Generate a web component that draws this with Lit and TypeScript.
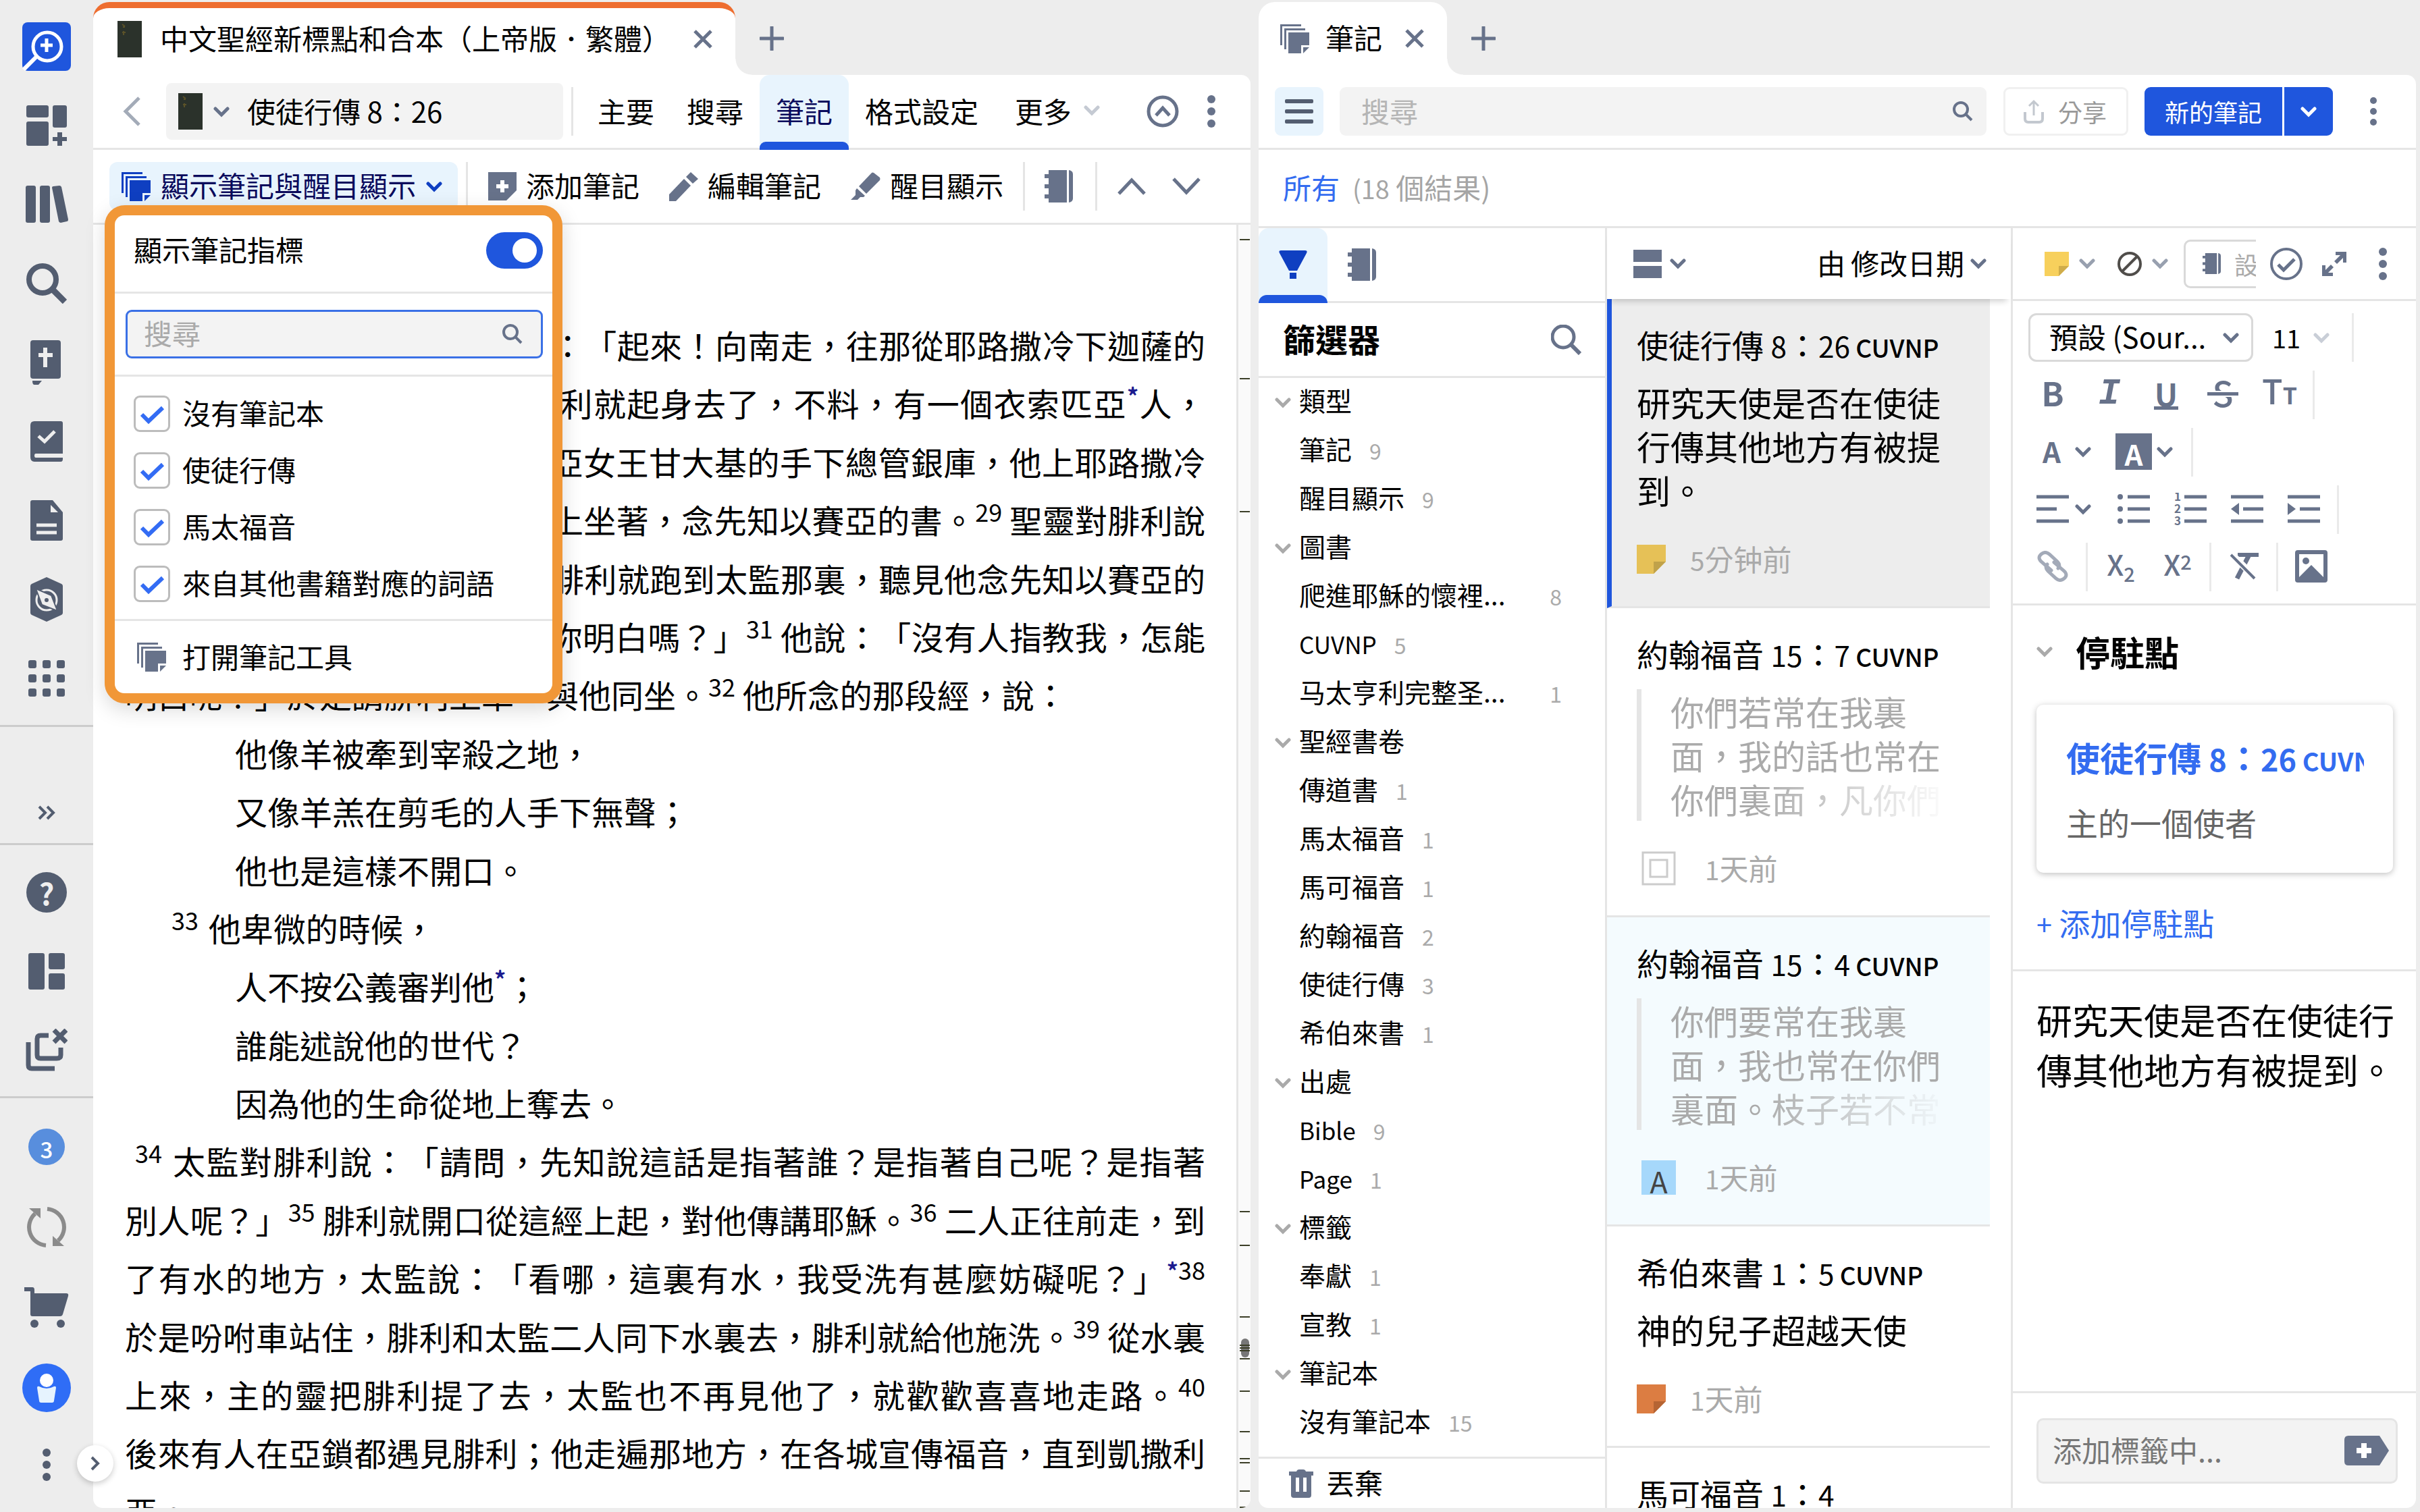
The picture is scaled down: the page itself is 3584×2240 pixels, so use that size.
import { LitElement, html, css, svg, nothing, type TemplateResult } from "lit";
import { customElement } from "lit/decorators.js";
import { classMap } from "lit/directives/class-map.js";

/* ---------- icons ---------- */

const chevronDown = svg`<path d="M3 4 L12 13 L21 4" fill="none" stroke="currentColor" stroke-width="5" stroke-linecap="round" stroke-linejoin="miter"/>`;

const shapes: Record<string, [number, number, TemplateResult]> = {
  logo: [72, 72, svg`
    <rect width="72" height="72" rx="8" fill="#1f56dd"/>
    <circle cx="37" cy="36" r="21" fill="none" stroke="#fff" stroke-width="5"/>
    <path d="M22 50 L2 70" stroke="#fff" stroke-width="6"/>
    <path d="M36 24 V44 M27 34 H45" stroke="#fff" stroke-width="5"/>`],
  addLayout: [60, 60, svg`<g fill="currentColor">
    <rect width="33" height="18" rx="3"/><rect y="24" width="33" height="36" rx="3"/>
    <rect x="39" width="21" height="33" rx="3"/>
    <path d="M46 40 h7 v7 h7 v6 h-7 v7 h-7 v-7 h-7 v-6 h7z"/></g>`],
  library: [63, 56, svg`<g fill="currentColor">
    <rect width="15" height="55" rx="3"/><rect x="21" width="15" height="55" rx="3"/>
    <path d="M39 3 q0-2 2-2 l9-1 q2 0 3 2 l10 48 q0 3-2 3 l-9 2 q-2 0-3-2z"/></g>`],
  search: [60, 60, svg`<circle cx="24" cy="24" r="20" fill="none" stroke="currentColor" stroke-width="8"/><path d="M38 38 L57 57" stroke="currentColor" stroke-width="9"/>`],
  bookCross: [48, 66, svg`
    <path d="M4 0 H41 q4 0 4 4 V53 q0 4-4 4 H4 q-4 0-4-4 V4 q0-4 4-4z" fill="currentColor"/>
    <path d="M3 60 H17 L12 66 H6 q-3 0-3-6z" fill="currentColor"/>
    <path d="M22 11 V40 M12 22 H33" stroke="#eee" stroke-width="6"/>`],
  bookCheck: [48, 60, svg`
    <path d="M6 0 H45 q3 0 3 3 V48 H8 q-2 0-2 3 t2 3 H48 V56 q0 4-3 4 H6 q-6 0-6-7 V6 q0-6 6-6z" fill="currentColor"/>
    <path d="M12 22 L21 30 L36 15" fill="none" stroke="#eee" stroke-width="5"/>`],
  page: [48, 60, svg`
    <path d="M3 0 H33 L48 18 V57 q0 3-3 3 H3 q-3 0-3-3 V3 q0-3 3-3z" fill="currentColor"/>
    <path d="M30 7 V18 H41z" fill="#eee"/>
    <path d="M9 37 H39 M9 48 H39" stroke="#eee" stroke-width="5"/>`],
  hex: [48, 66, svg`
    <path d="M24 0 L46 10 q2 1 2 3 V53 q0 2-2 3 L24 66 L2 56 q-2-1-2-3 V13 q0-2 2-3z" fill="currentColor"/>
    <circle cx="24" cy="34" r="15" fill="none" stroke="#eee" stroke-width="3"/>
    <path d="M8 17 L31 27 L40 50 L17 41z" fill="#eee" stroke="currentColor" stroke-width="2"/>
    <circle cx="24" cy="34" r="3" fill="currentColor"/>`],
  grid: [54, 54, svg`${[0, 21, 42].map((y) => [0, 21, 42].map((x) => svg`<rect x=${x} y=${y} width="12" height="12" rx="3" fill="currentColor"/>`))}`],
  double: [27, 22, svg`<path d="M2 2 L11 11 L2 20 M14 2 L23 11 L14 20" fill="none" stroke="currentColor" stroke-width="4"/>`],
  panes: [54, 54, svg`<g fill="currentColor"><rect width="24" height="54" rx="3"/><rect x="30" width="24" height="24" rx="3"/><rect x="30" y="30" width="24" height="24" rx="3"/></g>`],
  closeAll: [62, 63, svg`
    <path d="M4 20 V54 q0 5 5 5 H43" fill="none" stroke="currentColor" stroke-width="7"/>
    <path d="M34 10 H22 q-5 0-5 5 V39 q0 5 5 5 H46 q6 0 6-5 V28" fill="none" stroke="currentColor" stroke-width="7"/>
    <path d="M42 2 L60 20 M60 2 L42 20" stroke="currentColor" stroke-width="7"/>`],
  sync: [60, 62, svg`
    <path d="M29 58 A27 27 0 0 1 13 11" fill="none" stroke="currentColor" stroke-width="6"/>
    <path d="M4 3 H21 V18z" fill="currentColor"/>
    <path d="M31 4 A27 27 0 0 1 47 51" fill="none" stroke="currentColor" stroke-width="6"/>
    <path d="M56 59 H39 V44z" fill="currentColor"/>`],
  cart: [66, 60, svg`<path d="M0 0 H12 q3 0 3 4 V9 H62 q4 0 3 4 L57 40 q-1 3-4 3 H12 q-3 0-3-3 V6 H0z" fill="currentColor"/><circle cx="15" cy="54" r="6" fill="currentColor"/><circle cx="54" cy="54" r="6" fill="currentColor"/>`],
  avatar: [72, 72, svg`<circle cx="36" cy="36" r="36" fill="#2f6df6"/><path d="M22 36 q0-3 3-2 q11 6 22 0 q3-1 3 2 L47 55 q0 3-3 3 H28 q-3 0-3-3z" fill="#e6f3fe"/><circle cx="36" cy="25" r="10" fill="#fff"/>`],
  dots: [12, 48, svg`<g fill="currentColor"><circle cx="6" cy="6" r="6"/><circle cx="6" cy="24" r="6"/><circle cx="6" cy="42" r="6"/></g>`],
  dotsSmall: [12, 44, svg`<g fill="currentColor"><circle cx="6" cy="6" r="5"/><circle cx="6" cy="22" r="5"/><circle cx="6" cy="38" r="5"/></g>`],
  chevron: [24, 17, chevronDown],
  up: [42, 26, svg`<path d="M2 24 L21 4 L40 24" fill="none" stroke="currentColor" stroke-width="5"/>`],
  down: [42, 26, svg`<path d="M2 2 L21 22 L40 2" fill="none" stroke="currentColor" stroke-width="5"/>`],
  back: [26, 44, svg`<path d="M24 2 L4 22 L24 42" fill="none" stroke="currentColor" stroke-width="5"/>`],
  next: [16, 24, svg`<path d="M3 3 L12 12 L3 21" fill="none" stroke="currentColor" stroke-width="4"/>`],
  close: [28, 28, svg`<path d="M2 2 L26 26 M26 2 L2 26" stroke="currentColor" stroke-width="5"/>`],
  plus: [36, 36, svg`<path d="M18 1 V35 M1 18 H35" stroke="currentColor" stroke-width="5" stroke-linecap="round"/>`],
  book: [36, 54, svg`<rect width="36" height="54" fill="#2b322b"/><path d="M7 5 l4 3 M8 9 h3 M7 17 h5 M9 15 v6" stroke="#5b5228" stroke-width="2"/>`],
  notes: [43, 43, svg`<g fill="currentColor"><path d="M0 0 H31 V3 H3 V31 H0z"/><path d="M6 6 H37 V9 H9 V37 H6z"/><path d="M12 12 H43 V31 H31 V43 H12z"/><path d="M34 34 H43 L34 43z"/></g>`],
  addNote: [42, 42, svg`<path d="M0 0 H42 V27 L27 42 H0z" fill="currentColor"/><path d="M21 12 V30 M12 21 H30" stroke="#fff" stroke-width="6"/>`],
  pencil: [43, 43, svg`<g fill="currentColor"><path d="M0 43 V33 L22 10 L32 20 L10 43z"/><path d="M25 7 L32 0 L43 10 L35 17z"/></g>`],
  marker: [44, 42, svg`<g fill="currentColor"><path d="M12 21 L31 1 q1-1 3 0 L43 8 q1 2 0 4 L23 32z"/><path d="M9 24 L21 35 L19 37 H14 L10 41 H0 L7 34 V27z"/></g>`],
  notebook: [42, 48, svg`<g fill="currentColor"><path d="M6 0 H33 V48 H6 V42 H0 V36 H6 V27 H0 V21 H6 V12 H0 V6 H6z"/><path d="M36 0 q6 1 6 6 V42 q0 5-6 6z"/></g>`],
  circleUp: [48, 48, svg`<circle cx="24" cy="24" r="21" fill="none" stroke="currentColor" stroke-width="5"/><path d="M14 30 L24 19 L34 30" fill="none" stroke="currentColor" stroke-width="5"/>`],
  find: [30, 30, svg`<circle cx="12" cy="12" r="10" fill="none" stroke="currentColor" stroke-width="4"/><path d="M19 19 L28 28" stroke="currentColor" stroke-width="4"/>`],
  findBig: [45, 45, svg`<circle cx="18" cy="18" r="16" fill="none" stroke="currentColor" stroke-width="5"/><path d="M29 29 L43 43" stroke="currentColor" stroke-width="6"/>`],
  menu: [42, 36, svg`<g fill="currentColor"><rect width="42" height="6" rx="2"/><rect y="15" width="42" height="6" rx="2"/><rect y="30" width="42" height="6" rx="2"/></g>`],
  share: [30, 36, svg`<path d="M15 24 V4 M8 10 L15 3 L22 10" fill="none" stroke="currentColor" stroke-width="3"/><path d="M2 19 V29 q0 5 5 5 H23 q5 0 5-5 V19" fill="none" stroke="currentColor" stroke-width="4"/>`],
  funnel: [42, 42, svg`<path d="M3 0 H39 q4 0 2 4 L27 30 H15 L1 4 q-2-4 2-4z M16 33 H26 V42 H16z" fill="currentColor"/>`],
  cards: [42, 42, svg`<path d="M0 0 H42 V18 H0z M0 24 H42 V42 H0z" fill="currentColor"/>`],
  noStyle: [36, 36, svg`<circle cx="18" cy="18" r="16" fill="none" stroke="currentColor" stroke-width="4"/><path d="M7 29 L29 7" stroke="currentColor" stroke-width="4"/>`],
  circleCheck: [48, 48, svg`<circle cx="24" cy="24" r="22" fill="none" stroke="currentColor" stroke-width="4"/><path d="M12 25 L20 33 L36 17" fill="none" stroke="currentColor" stroke-width="5"/>`],
  expand: [36, 36, svg`<g fill="currentColor"><path d="M20 0 H36 V16 H31 V9 L22 18 L18 14 L27 5 H20z"/><path d="M16 36 H0 V20 H5 V27 L13 19 L17 23 L9 31 H16z"/></g>`],
  alignLeft: [48, 42, svg`<path d="M0 3 H48 M0 21 H30 M0 39 H48" stroke="currentColor" stroke-width="5"/>`],
  bullets: [48, 44, svg`<path d="M15 4 H48 M15 22 H48 M15 40 H48" stroke="currentColor" stroke-width="5"/><g fill="currentColor"><circle cx="4" cy="4" r="4"/><circle cx="4" cy="22" r="4"/><circle cx="4" cy="40" r="4"/></g>`],
  numbers: [48, 48, svg`<path d="M15 6 H48 M15 24 H48 M15 42 H48" stroke="currentColor" stroke-width="5"/><g fill="currentColor" font-size="17" font-weight="700"><text x="0" y="12">1</text><text x="0" y="30">2</text><text x="0" y="48">3</text></g>`],
  outdent: [48, 44, svg`<path d="M0 4 H48 M18 22 H48 M0 40 H48" stroke="currentColor" stroke-width="5"/><path d="M0 22 L12 13 V31z" fill="currentColor"/>`],
  indent: [48, 44, svg`<path d="M0 4 H48 M18 22 H48 M0 40 H48" stroke="currentColor" stroke-width="5"/><path d="M12 22 L0 13 V31z" fill="currentColor"/>`],
  link: [46, 46, svg`<g fill="none" stroke="currentColor" stroke-width="5" stroke-linecap="round"><path d="M21 29 L6 16 q-6-6 0-11 q6-5 12 0 L30 16 q5 5 1 10"/><path d="M25 17 L40 30 q6 6 0 11 q-6 5-12 0 L16 30 q-5-5-1-10"/></g>`],
  clear: [42, 40, svg`<path d="M11 3 H42" stroke="currentColor" stroke-width="6"/><path d="M28 3 L10 38" stroke="currentColor" stroke-width="7"/><path d="M2 2 L37 37" stroke="#fff" stroke-width="10"/><path d="M1 3 L36 38" stroke="currentColor" stroke-width="4"/>`],
  image: [48, 48, svg`<path d="M4 0 H44 q4 0 4 4 V44 q0 4-4 4 H4 q-4 0-4-4 V4 q0-4 4-4z M6 6 V40 L24 22 L42 40 V6z" fill="currentColor" fill-rule="evenodd"/><circle cx="16" cy="16" r="5" fill="currentColor"/>`],
  boxed: [51, 51, svg`<path d="M2 2 H49 V49 H2z M13 13 H38 V38 H13z" fill="none" stroke="currentColor" stroke-width="3"/>`],
  trash: [36, 42, svg`<path d="M0 3 H11 q1-3 4-3 H21 q3 0 4 3 H36 V9 H33 V38 q0 4-4 4 H7 q-4 0-4-4 V9 H0z M10 12 V33 H15 V12z M21 12 V33 H26 V12z" fill="currentColor" fill-rule="evenodd"/>`],
  tag: [66, 44, svg`<path d="M6 0 H52 L66 22 L52 44 H6 q-6 0-6-6 V6 q0-6 6-6z" fill="currentColor"/><path d="M29 11 V33 M18 22 H40" stroke="#fff" stroke-width="8"/>`],
  tick: [54, 54, svg`<path d="M12 28 L22 38 L43 18" fill="none" stroke="#336cf4" stroke-width="6"/>`],
};

const icon = (name: string, cls = "") => {
  const [w, h, body] = shapes[name];
  return html`<svg class="icon ${cls}" width=${w} height=${h} viewBox="0 0 ${w} ${h}" aria-hidden="true">${body}</svg>`;
};

const sticky = (size: number, fill: string, fold: string) => html`<svg class="icon" width=${size} height=${size} viewBox="0 0 36 36" aria-hidden="true">
  <path d="M0 0 H36 V21 L21 36 H0z" fill=${fill}/><path d="M21 21 H36 L21 36z" fill=${fold}/></svg>`;

/* Sets Latin letters and digits one step smaller than the Han characters beside them. */
const mixed = (text: string) =>
  text.split(/([A-Za-z0-9(+]+)/).map((part, i) => (i % 2 ? html`<span class="lat">${part}</span>` : part));

/* ---------- shared styles ---------- */

const base = css`
  * { box-sizing: border-box; }
  :host {
    --slate: #67728a;
    --line: #e5e5e5;
    --blue: #1f56dd;
    --link: #336cf0;
    --pale: #e8f4fd;
    --muted: #aaa;
    font-family: "Noto Sans CJK TC", "Noto Sans", sans-serif;
    font-size: 42px;
    line-height: 60px;
    color: #000;
    text-spacing-trim: space-all;
  }
  button, input, select {
    font: inherit;
    color: inherit;
    border: 0;
    padding: 0;
    margin: 0;
    background: none;
    outline: none;
    min-width: 0;
    text-spacing-trim: inherit;
  }
  button {
    display: flex;
    align-items: center;
    justify-content: center;
    white-space: nowrap;
  }
  select { appearance: none; }
  a { color: inherit; text-decoration: none; }
  h2, h3, p, ul { margin: 0; padding: 0; font-weight: 400; }
  ul { list-style: none; }
  .icon { display: block; flex: none; }
  .slate { color: var(--slate); }
  .lat { font-size: 90%; line-height: 0; }
  .cap { padding-bottom: 4px; }
  .strip { display: flex; height: 108px; flex: none; }
  .tab {
    position: relative;
    display: flex;
    align-items: center;
    height: 108px;
    background: #fff;
    border-radius: 24px 24px 0 0;
  }
  .tab::after {
    content: "";
    position: absolute;
    left: 100%;
    bottom: 0;
    width: 24px;
    height: 24px;
    background: radial-gradient(circle at 100% 0, transparent 23px, #fff 24px);
  }
  .new { width: 108px; height: 108px; }
  .sheet {
    flex: 1;
    min-height: 0;
    display: flex;
    flex-direction: column;
    background: #fff;
    border-radius: 0 14px 14px 14px;
    overflow: hidden;
  }
  .bar { display: flex; align-items: center; flex: none; height: 111px; border-bottom: 3px solid var(--line); }
  .vr { flex: none; width: 3px; height: 72px; background: var(--line); }
  .square { flex: none; width: 72px; height: 72px; color: var(--slate); }
`;

/* ---------- left rail ---------- */

@customElement("side-rail")
class SideRail extends LitElement {
  static styles = [base, css`
    :host { display: flex; flex-direction: column; color: #535d70; }
    .group { display: flex; flex-direction: column; align-items: center; }
    .group + .group { border-top: 3px solid #ccc; }
    .top { padding: 10px 0 0; height: 1074px; }
    .more { height: 175px; justify-content: flex-end; }
    .mid { height: 375px; padding: 11px 0; }
    .end { flex: 1; padding-top: 12px; }
    .item { width: 120px; height: 117px; flex: none; }
    .more .item { height: 91px; }
    .end .item { height: 119px; }
    .end .last { height: 109px; }
    .help, .badge {
      display: grid;
      place-items: center;
      border-radius: 50%;
      font-weight: 700;
      color: #eee;
    }
    .help { width: 60px; height: 60px; background: #535d70; font-size: 44px; padding-bottom: 4px; }
    .badge { width: 54px; height: 54px; background: #588edd; font-size: 33px; font-weight: 500; color: #fff; padding-bottom: 4px; }
    .sync { color: #8b8b8b; }
  `];
  render() {
    const item = (name: string, label: string, cls = "") =>
      html`<button class="item ${cls}" aria-label=${label}>${icon(name)}</button>`;
    return html`
      <nav class="group top">
        ${item("logo", "首頁")}${item("addLayout", "版面")}${item("library", "圖書館")}
        ${item("search", "搜尋")}${item("bookCross", "聖經")}${item("bookCheck", "計劃")}
        ${item("page", "文件")}${item("hex", "探索")}${item("grid", "工具")}
      </nav>
      <div class="group more">${item("double", "展開")}</div>
      <div class="group mid">
        <button class="item"><span class="help">?</span></button>
        ${item("panes", "版面配置")}${item("closeAll", "全部關閉")}
      </div>
      <div class="group end">
        <button class="item"><span class="badge">3</span></button>
        ${item("sync", "同步", "sync")}${item("cart", "購物車")}${item("avatar", "帳戶")}${item("dots", "選單", "last")}
      </div>`;
  }
}

/* ---------- notes popup ---------- */

@customElement("notes-menu")
class NotesMenu extends LitElement {
  static styles = [base, css`
    :host {
      display: block;
      border: 15px solid #f19737;
      border-radius: 30px;
      background: #f19737;
      box-shadow: 0 9px 30px rgba(0, 0, 0, 0.15);
    }
    .body { background: #fff; border-radius: 14px; }
    .row { display: flex; align-items: center; }
    .head { justify-content: space-between; height: 116px; padding: 0 14px 10px 28px; border-bottom: 3px solid var(--line); }
    .switch {
      appearance: none;
      width: 84px;
      height: 54px;
      border-radius: 27px;
      background: var(--blue);
      display: flex;
      justify-content: flex-end;
      align-items: center;
      padding-right: 9px;
    }
    .switch::before { content: ""; width: 36px; height: 36px; border-radius: 50%; background: #fff; }
    .seek { height: 123px; padding: 0 14px 0 16px; border-bottom: 3px solid var(--line); }
    .field {
      display: flex;
      align-items: center;
      width: 100%;
      height: 72px;
      padding: 0 27px 0 24px;
      border: 3px solid #3a70e6;
      border-radius: 9px;
      background: #f3f3f3;
    }
    .field input { flex: 1; height: 60px; padding-bottom: 4px; }
    ::placeholder { color: var(--muted); opacity: 1; }
    .list { padding: 13px 28px 10px; border-bottom: 3px solid var(--line); }
    .option { display: flex; align-items: center; gap: 18px; height: 84px; }
    .box { display: grid; flex: none; }
    .box > * { grid-area: 1 / 1; }
    .box input {
      appearance: none;
      width: 54px;
      height: 54px;
      border: 3px solid #bcbcbc;
      border-radius: 9px;
      background: #fff;
    }
    .box .icon { pointer-events: none; }
    .open { gap: 24px; height: 107px; padding-left: 33px; }
  `];
  render() {
    const options = ["沒有筆記本", "使徒行傳", "馬太福音", "來自其他書籍對應的詞語"];
    return html`<div class="body">
      <div class="row head">
        <label class="cap" for="indicator">顯示筆記指標</label>
        <input id="indicator" class="switch" type="checkbox" role="switch" checked>
      </div>
      <div class="row seek">
        <label class="field"><input type="text" placeholder="搜尋" aria-label="搜尋">${icon("find", "slate")}</label>
      </div>
      <div class="list">
        ${options.map((o) => html`<label class="option">
          <span class="box"><input type="checkbox" checked>${icon("tick")}</span><span class="cap">${o}</span></label>`)}
      </div>
      <button class="row open">${icon("notes", "slate")}<span class="cap">打開筆記工具</span></button>
    </div>`;
  }
}

/* ---------- bible pane ---------- */

@customElement("bible-pane")
class BiblePane extends LitElement {
  static styles = [base, css`
    :host { position: relative; }
    .tab.active { border-top: 9px solid #ee6d2f; width: 951px; padding: 0 34px 8px 36px; }
    .title { flex: 1; padding-left: 27px; white-space: nowrap; }
    .ref-bar { padding-left: 21px; }
    .back { color: #a3abb8; margin-right: 15px; }
    .ref {
      flex: 1;
      min-width: 0;
      display: flex;
      align-items: center;
      height: 84px;
      padding-left: 18px;
      margin-right: 12px;
      background: #f3f3f3;
      border-radius: 8px;
    }
    .ref .chev { margin: 0 26px 0 16px; }
    .ref input { flex: 1; height: 66px; padding-bottom: 4px; }
    .tools { display: flex; align-self: stretch; margin: 0 0 -3px 12px; }
    .tools button { padding: 0 24px 6px; }
    .tools .on {
      background: var(--pale);
      color: #0a0a5c;
      border-radius: 15px 15px 0 0;
      position: relative;
    }
    .tools .on::after {
      content: "";
      position: absolute;
      inset: auto 0 0 0;
      height: 12px;
      border-radius: 9px 9px 0 0;
      background: var(--blue);
    }
    .tools .more { gap: 18px; padding-left: 30px; padding-right: 57px; }
    .faint { color: #c5cad3; }
    .dots { margin-right: 22px; }
    .note-bar { padding-left: 24px; }
    .note-bar .toggle {
      height: 72px;
      gap: 15px;
      padding: 0 23px 0 18px;
      margin-right: 12px;
      border-radius: 12px;
      background: var(--pale);
      color: #0a0a5c;
    }
    .toggle .icon { color: #0f3fc1; }
    .act { gap: 14px; padding-right: 44px; }
    .first { padding-left: 30px; }
    .last { padding-right: 29px; }
    .nb { padding: 0 33px 0 29px; }
    .step { padding-left: 30px; }
    .step + .step { padding-left: 39px; }
    .page { flex: 1; min-height: 0; display: flex; overflow: hidden; }
    .text {
      flex: 1;
      padding: 134px 46px 0 47px;
      font-size: 48px;
      line-height: 1.8;
      text-align: justify;
    }
    .verse-one { text-indent: 48px; }
    .verse { text-indent: 15px; }
    .poem { padding-left: 163px; }
    .poem .hang { margin-left: -94px; }
    .text sup { font-size: 36px; line-height: 0; vertical-align: 17px; }
    .text .lead { padding-right: 4px; }
    .text .fn { color: #1b1b8f; font-weight: 700; font-size: 34px; }
    .keep { white-space: nowrap; }
    .map { position: relative; flex: none; width: 21px; background: #fafafa; border-left: 3px solid var(--line); }
    .mark { position: absolute; left: 2px; right: 1px; height: 2px; background: #3c3f28; }
    .thumb { position: absolute; left: 4px; width: 12px; height: 28px; border-radius: 6px; background: #777; }
    .expander {
      position: absolute;
      left: -24px;
      bottom: 39px;
      width: 54px;
      height: 54px;
      border-radius: 50%;
      background: #fff;
      color: #535d70;
      box-shadow: 0 3px 9px rgba(0, 0, 0, 0.2);
    }
    notes-menu { position: absolute; left: 17px; top: 301px; width: 678px; }
  `];
  marks = [21, 227, 424, 1461, 1511, 1617, 1659, 1663, 1667, 1679, 1727, 1787, 1827, 1833, 1875, 1899];
  render() {
    const v = (n: number) => html`<sup>${n}</sup> `;
    const lead = (n: number) => html`<sup class="lead">${n}</sup> `;
    const fn = html`<sup class="fn">*</sup>`;
    return html`
      <div class="strip">
        <div class="tab active">${icon("book")}<span class="title cap">中文聖經新標點和合本（上帝版．繁體）</span>
          <button class="slate" aria-label="關閉">${icon("close")}</button></div>
        <button class="new slate" aria-label="新分頁">${icon("plus")}</button>
      </div>
      <section class="sheet">
        <div class="bar ref-bar">
          <button class="square back" aria-label="返回">${icon("back")}</button>
          <div class="ref">${icon("book")}${icon("chevron", "chev slate")}<input type="text" aria-label="經文" value="使徒行傳 8：26"></div>
          <span class="vr"></span>
          <div class="tools">
            <button>主要</button><button>搜尋</button><button class="on">筆記</button><button>格式設定</button>
            <button class="more">更多${icon("chevron", "faint")}</button>
          </div>
          <button class="square" aria-label="收起">${icon("circleUp")}</button>
          <button class="square dots" aria-label="選單">${icon("dots")}</button>
        </div>
        <div class="bar note-bar">
          <button class="toggle">${icon("notes")}<span class="cap">顯示筆記與醒目顯示</span>${icon("chevron")}</button>
          <span class="vr"></span>
          <button class="act first">${icon("addNote", "slate")}<span class="cap">添加筆記</span></button>
          <button class="act">${icon("pencil", "slate")}<span class="cap">編輯筆記</span></button>
          <button class="act last">${icon("marker", "slate")}<span class="cap">醒目顯示</span></button>
          <span class="vr"></span>
          <button class="nb slate" aria-label="筆記本">${icon("notebook")}</button>
          <span class="vr"></span>
          <button class="step slate" aria-label="上一個">${icon("up")}</button>
          <button class="step slate" aria-label="下一個">${icon("down")}</button>
        </div>
        <div class="page">
          <article class="text" lang="zh-Hant">
            <p class="verse-one">${v(26)}有主的一個使者對腓利說：「起來！向南走，往那從耶路撒冷下迦薩的路上去。」那路是曠野。${v(27)}腓利就起身去了，不料，有一個衣索匹亞${fn}人，是個有大權的太監，在衣索匹亞女王甘大基的手下總管銀庫，他上耶路撒冷禮拜去了。${v(28)}現在回來，在車上坐著，念先知以賽亞的書。${v(29)}聖靈對腓利說<wbr>：「你去！貼近那車走。」${v(30)}腓利就跑到太監那裏，聽見他念先知以賽亞的書，便問他說：「你所念的，你明白嗎？」${v(31)}他說：「沒有人指教我，怎能明白呢？」於是請腓利上車，與他同坐。${v(32)}他所念的那段經，說：</p>
            <p class="poem">他像羊被牽到宰殺之地，</p>
            <p class="poem">又像羊羔在剪毛的人手下無聲；</p>
            <p class="poem">他也是這樣不開口。</p>
            <p class="poem"><span class="hang">${lead(33)}他卑微的時候，</span></p>
            <p class="poem">人不按公義審判他${fn}；</p>
            <p class="poem">誰能述說他的世代？</p>
            <p class="poem">因為他的生命從地上奪去。</p>
            <p class="verse">${lead(34)}太監對腓利說：「請問，先知說這話是指著誰？是指著自己呢？是指著別人呢？」${v(35)}腓利就開口從這經上起，對他傳講耶穌。${v(36)}二人正往前走，到了有水的地方，太監說：「看哪，這裏有水，我受洗有甚麼妨礙呢？」${fn}${v(38)}<span class="keep">於是</span>吩咐車站住，腓利和太監二人同下水裏去，腓利就給他施洗。${v(39)}從水裏上來，主的靈把腓利提了去，太監也不再見他了，就歡歡喜喜地走路。${v(40)}<span class="keep">後來</span>有人在亞鎖都遇見腓利；他走遍那地方，在各城宣傳福音，直到凱撒利亞。</p>
          </article>
          <div class="map">
            <span class="thumb" style="top:1650px"></span>
            ${this.marks.map((y) => html`<span class="mark" style="top:${y}px"></span>`)}
          </div>
        </div>
      </section>
      <notes-menu></notes-menu>
      <button class="expander" aria-label="展開側欄">${icon("next")}</button>`;
  }
}

/* ---------- filter column ---------- */

type Filter = { t: string; n?: number; wide?: boolean };
const filters: Filter[] = [
  { t: "類型" }, { t: "筆記", n: 9 }, { t: "醒目顯示", n: 9 },
  { t: "圖書" }, { t: "爬進耶穌的懷裡...", n: 8, wide: true }, { t: "CUVNP", n: 5 }, { t: "马太亨利完整圣...", n: 1, wide: true },
  { t: "聖經書卷" }, { t: "傳道書", n: 1 }, { t: "馬太福音", n: 1 }, { t: "馬可福音", n: 1 }, { t: "約翰福音", n: 2 },
  { t: "使徒行傳", n: 3 }, { t: "希伯來書", n: 1 },
  { t: "出處" }, { t: "Bible", n: 9 }, { t: "Page", n: 1 },
  { t: "標籤" }, { t: "奉獻", n: 1 }, { t: "宣教", n: 1 },
  { t: "筆記本" }, { t: "沒有筆記本", n: 15 },
];

@customElement("filter-column")
class FilterColumn extends LitElement {
  static styles = [base, css`
    :host { display: flex; flex-direction: column; min-width: 0; border-right: 3px solid var(--line); }
    .tabs { display: flex; flex: none; height: 111px; border-bottom: 3px solid var(--line); }
    .tabs button { width: 102px; height: 111px; padding-bottom: 3px; color: var(--slate); }
    .tabs .on {
      position: relative;
      color: #0f3fc1;
      background: var(--pale);
      border-radius: 15px 15px 0 0;
    }
    .tabs .on::after {
      content: "";
      position: absolute;
      inset: auto 0 0 0;
      height: 12px;
      border-radius: 12px 12px 0 0;
      background: var(--blue);
    }
    .head {
      display: flex;
      align-items: center;
      justify-content: space-between;
      flex: none;
      height: 111px;
      padding: 0 35px 0 36px;
      border-bottom: 3px solid var(--line);
    }
    h2 { font-size: 48px; font-weight: 700; padding-bottom: 5px; }
    .list { flex: 1; min-height: 0; overflow: hidden; font-size: 39px; }
    .list li { display: flex; align-items: baseline; height: 72px; line-height: 65px; padding: 0 64px 0 60px; }
    .list .group { padding-left: 24px; align-items: center; gap: 12px; color: var(--muted); }
    .group button { color: #000; line-height: 65px; padding-bottom: 7px; }
    .count { color: var(--muted); font-size: 32px; padding-left: 26px; }
    .wide { justify-content: space-between; }
    .foot {
      flex: none;
      justify-content: flex-start;
      gap: 19px;
      height: 76px;
      padding-left: 45px;
      border-top: 3px solid var(--line);
    }
  `];
  render() {
    return html`
      <div class="tabs"><button class="on" aria-label="篩選">${icon("funnel")}</button><button aria-label="筆記本">${icon("notebook")}</button></div>
      <div class="head"><h2>篩選器</h2><button class="slate" aria-label="搜尋">${icon("findBig")}</button></div>
      <ul class="list">${filters.map((f) => f.n === undefined
        ? html`<li class="group">${icon("chevron")}<button>${f.t}</button></li>`
        : html`<li class=${classMap({ wide: !!f.wide })}><a href="#">${mixed(f.t)}</a><span class="count">${f.n}</span></li>`)}</ul>
      <button class="foot">${icon("trash", "slate")}<span class="cap">丟棄</span></button>`;
  }
}

/* ---------- note list ---------- */

type Note = { ref: string; ver?: string; body?: string; quote?: string; time?: string; mark?: string; state?: string };
const notes: Note[] = [
  { ref: "使徒行傳 8：26", ver: "CUVNP", body: "研究天使是否在使徒行傳其他地方有被提到。", time: "5分钟前", mark: "yellow", state: "selected" },
  { ref: "約翰福音 15：7", ver: "CUVNP", quote: "你們若常在我裏面，我的話也常在你們裏面，凡你們", time: "1天前", mark: "boxed" },
  { ref: "約翰福音 15：4", ver: "CUVNP", quote: "你們要常在我裏面，我也常在你們裏面。枝子若不常", time: "1天前", mark: "letter", state: "hover" },
  { ref: "希伯來書 1：5", ver: "CUVNP", body: "神的兒子超越天使", time: "1天前", mark: "orange" },
  { ref: "馬可福音 1：4" },
];

@customElement("note-list")
class NoteList extends LitElement {
  static styles = [base, css`
    :host { display: flex; flex-direction: column; min-width: 0; border-right: 3px solid var(--line); }
    .head {
      position: relative;
      z-index: 1;
      display: flex;
      align-items: center;
      justify-content: space-between;
      flex: none;
      height: 105px;
      padding: 0 36px 0 39px;
      background: #fff;
      box-shadow: 0 9px 9px -6px rgba(0, 0, 0, 0.2);
    }
    .view { gap: 12px; color: var(--slate); }
    .sort { display: flex; align-items: center; gap: 8px; }
    .sort select { padding-bottom: 4px; }
    .list { flex: 1; min-height: 0; overflow: hidden; padding-right: 31px; }
    .card { padding: 34px 56px 36px 44px; border-bottom: 3px solid var(--line); }
    .selected { background: #ededed; border-left: 7px solid var(--blue); padding-left: 37px; }
    .hover { background: #f4fbfe; }
    .ref { font-size: 47px; line-height: 66px; margin-bottom: 20px; white-space: nowrap; }
    .ver { font-size: 37px; font-weight: 500; line-height: 0; }
    .body, .quote { font-size: 50px; line-height: 65px; }
    .quote { border-left: 7px solid var(--line); padding-left: 43px; }
    .quote p {
      height: 195px;
      overflow: hidden;
      color: var(--muted);
      -webkit-mask: linear-gradient(#000, #000) top / 100% 130px no-repeat,
        linear-gradient(to right, #000 30%, transparent 100%) bottom / 100% 65px no-repeat;
    }
    .meta { display: flex; align-items: center; height: 68px; margin-top: 36px; gap: 36px; font-size: 43px; color: var(--muted); }
    time { padding-bottom: 3px; }
    .meta .inset { margin: 0 7px; }
    .meta .frame { color: #ccc; }
    .letter { display: grid; place-items: center; width: 51px; height: 51px; background: #a6d8fb; color: #444; }
  `];
  mark(kind?: string) {
    if (kind === "yellow") return sticky(43, "#e6c157", "#c0a24a");
    if (kind === "orange") return sticky(43, "#dc7d42", "#b56433");
    if (kind === "boxed") return icon("boxed", "inset frame");
    return html`<span class="letter inset">A</span>`;
  }
  render() {
    return html`
      <div class="head">
        <button class="view" aria-label="檢視">${icon("cards")}${icon("chevron")}</button>
        <label class="sort"><span class="cap">由</span><select><option>修改日期</option></select>${icon("chevron", "slate")}</label>
      </div>
      <div class="list">${notes.map((n) => html`<article class="card ${n.state ?? ""}">
        <h3 class="ref">${mixed(n.ref)}${n.ver ? html`<span class="ver"> ${n.ver}</span>` : nothing}</h3>
        ${n.body ? html`<p class="body">${n.body}</p>` : nothing}
        ${n.quote ? html`<div class="quote"><p>${n.quote}</p></div>` : nothing}
        ${n.time ? html`<div class="meta">${this.mark(n.mark)}<time>${mixed(n.time)}</time></div>` : nothing}
      </article>`)}</div>`;
  }
}

/* ---------- note editor ---------- */

@customElement("note-editor")
class NoteEditor extends LitElement {
  static styles = [base, css`
    :host { display: flex; flex-direction: column; min-width: 0; }
    .head { display: flex; align-items: center; flex: none; height: 108px; padding: 0 43px 0 47px; border-bottom: 3px solid var(--line); color: var(--slate); }
    .pick { gap: 15px; padding-right: 33px; color: #98a0af; }
    .pick + .pick { padding-right: 23px; }
    .none { color: #504d4a; }
    .shelf { flex: 1; overflow: hidden; }
    .shelf button {
      width: 240px;
      height: 72px;
      justify-content: flex-start;
      gap: 20px;
      padding-left: 25px;
      border: 3px solid #d9d9d9;
      border-radius: 10px;
      font-size: 36px;
      color: var(--muted);
    }
    .ok { padding: 0 29px 0 21px; }
    .grow { padding-right: 48px; }
    .format { flex: none; padding: 18px 23px; border-bottom: 3px solid var(--line); color: var(--slate); }
    .line { display: flex; align-items: center; height: 72px; margin-bottom: 13px; }
    .line:last-child { margin-bottom: 0; }
    .line button { flex: none; width: 84px; height: 72px; padding-bottom: 2px; }
    .line .pair { gap: 12px; justify-content: flex-start; }
    .line .vr { background: #eaeaea; }
    .family {
      display: flex;
      align-items: center;
      width: 333px;
      height: 72px;
      padding: 0 18px 0 28px;
      border: 3px solid #d9d9d9;
      border-radius: 12px;
    }
    .family select { flex: 1; color: #000; padding-bottom: 4px; }
    .size { display: flex; align-items: center; gap: 18px; padding: 0 33px 0 28px; }
    .size select { color: #000; font-size: 38px; }
    .faint { color: #c9ced7; }
    .type { margin-left: -6px; }
    .type .vr { margin-left: 7px; }
    .b, .s, .tt { padding-bottom: 6px; }
    .b { font-size: 49px; font-weight: 700; }
    .i { font: italic 700 54px/60px "Liberation Mono", monospace; }
    .u { font-size: 46px; font-weight: 700; line-height: 40px; width: 36px; text-align: center; border-bottom: 5px solid; }
    .s { position: relative; font-size: 51px; font-weight: 500; }
    .s::after { content: ""; position: absolute; left: -7px; right: -7px; top: 30px; height: 5px; background: currentColor; box-shadow: 0 0 0 2px #fff; }
    .tt { font-size: 50px; font-weight: 500; }
    .tt small { font-size: 34px; font-weight: 700; }
    .a { font-size: 42px; font-weight: 700; padding-bottom: 2px; }
    .fill { display: grid; place-items: center; width: 54px; height: 54px; background: var(--slate); color: #fff; }
    .line .pair.colour { width: 129px; padding-left: 21px; gap: 21px; }
    .line .pair.shade { width: 112px; gap: 7px; }
    .line .pair.align { width: 114px; padding-left: 12px; gap: 9px; }
    .lists .vr { margin-left: 7px; }
    .insert .vr { margin: 0 7px 0 5px; }
    .line .off { opacity: 0.6; width: 80px; padding-right: 8px; }
    .x { font-weight: 500; font-size: 42px; padding-bottom: 4px; }
    .x small { font-size: 29px; }
    .x .lo { position: relative; top: 9px; }
    .x .hi { position: relative; top: -9px; }
    .anchors { flex: none; padding: 32px 34px 0 35px; height: 542px; border-bottom: 3px solid var(--line); }
    .anchors h2 { display: flex; align-items: center; gap: 34px; height: 72px; font-size: 51px; font-weight: 700; }
    .anchors h2 .icon { color: var(--muted); }
    .card {
      margin: 43px 0 38px;
      height: 249px;
      padding: 44px 43px 0 44px;
      border-radius: 10px;
      box-shadow: 0 2px 10px rgba(0, 0, 0, 0.25);
    }
    .card a { display: block; overflow: hidden; white-space: nowrap; font-size: 50px; line-height: 66px; font-weight: 700; color: var(--link); }
    .ver { font-size: 38px; line-height: 0; }
    .card p { margin-top: 31px; font-size: 47px; line-height: 66px; color: #666; }
    .add { font-size: 46px; line-height: 70px; color: var(--link); }
    .text { flex: 1; min-height: 0; padding: 34px 24px 0 35px; font-size: 53px; line-height: 74px; }
    .tags { flex: none; display: flex; align-items: center; height: 173px; padding: 0 27px 0 35px; border-top: 3px solid var(--line); }
    .tags label {
      flex: 1;
      min-width: 0;
      display: flex;
      align-items: center;
      height: 97px;
      padding: 0 10px 0 21px;
      border: 3px solid var(--line);
      border-radius: 10px;
      background: #f3f3f3;
    }
    .tags input { flex: 1; height: 70px; font-size: 43px; padding-bottom: 4px; }
    ::placeholder { color: #777; opacity: 1; }
  `];
  render() {
    const vr = html`<span class="vr"></span>`;
    const tool = (name: string, label: string, cls = "") => html`<button class=${cls} aria-label=${label}>${icon(name)}</button>`;
    return html`
      <div class="head">
        <button class="pick" aria-label="顏色">${sticky(36, "#f7d05c", "#cfac4a")}${icon("chevron")}</button>
        <button class="pick" aria-label="樣式">${icon("noStyle", "none")}${icon("chevron")}</button>
        <div class="shelf"><button><svg class="icon slate" width="27" height="31" viewBox="0 0 42 48" aria-hidden="true">${shapes.notebook[2]}</svg>設</button></div>
        <button class="ok" aria-label="完成">${icon("circleCheck")}</button>
        <button class="grow" aria-label="放大">${icon("expand")}</button>
        <button aria-label="選單">${icon("dots")}</button>
      </div>
      <div class="format">
        <div class="line">
          <label class="family"><select aria-label="字型"><option>預設 (Sour...</option></select>${icon("chevron")}</label>
          <label class="size"><select aria-label="字級"><option>11</option></select>${icon("chevron", "faint")}</label>${vr}
        </div>
        <div class="line type">
          <button><span class="b">B</span></button><button><span class="i">I</span></button><button><span class="u">U</span></button>
          <button><span class="s">S</span></button><button><span class="tt">T<small>T</small></span></button>${vr}
        </div>
        <div class="line">
          <button class="pair colour"><span class="a">A</span>${icon("chevron")}</button>
          <button class="pair shade"><span class="a fill">A</span>${icon("chevron")}</button>${vr}
        </div>
        <div class="line lists">
          <button class="pair align" aria-label="對齊">${icon("alignLeft")}${icon("chevron")}</button>
          ${tool("bullets", "項目符號")}${tool("numbers", "編號")}${tool("outdent", "減少縮排")}${tool("indent", "增加縮排")}${vr}
        </div>
        <div class="line insert">
          ${tool("link", "連結", "off")}${vr}
          <button><span class="x">X<small class="lo">2</small></span></button><button><span class="x">X<small class="hi">2</small></span></button>${vr}
          ${tool("clear", "清除格式")}${vr}${tool("image", "圖片")}
        </div>
      </div>
      <div class="anchors">
        <h2>${icon("chevron")}停駐點</h2>
        <div class="card"><a href="#">${mixed("使徒行傳 8：26")}<span class="ver"> CUVNP</span></a><p>主的一個使者</p></div>
        <button class="add"><span>${mixed("+ 添加停駐點")}</span></button>
      </div>
      <p class="text">研究天使是否在使徒行傳其他地方有被提到。</p>
      <div class="tags"><label><input type="text" placeholder="添加標籤中..." aria-label="標籤">${icon("tag", "slate")}</label></div>`;
  }
}

/* ---------- notes pane ---------- */

@customElement("notes-pane")
class NotesPane extends LitElement {
  static styles = [base, css`
    .tab { width: 279px; padding: 0 34px 0 32px; }
    .name { flex: 1; padding-left: 24px; }
    .top { padding: 0 27px 0 24px; }
    .menu { background: var(--pale); color: #535d70; border-radius: 9px; margin-right: 24px; }
    .field { flex: 1; min-width: 0; display: flex; align-items: center; height: 72px; padding: 0 20px 0 32px; background: #f3f3f3; border-radius: 9px; }
    .field input { flex: 1; height: 66px; padding-bottom: 4px; }
    ::placeholder { color: #b5b5b5; opacity: 1; }
    .share { height: 72px; margin: 0 24px 0 25px; padding: 0 29px 0 27px; gap: 21px; border: 3px solid #f0f0f0; border-radius: 9px; font-size: 36px; color: #999; }
    .share .icon { color: #c3c8cf; }
    .primary { display: flex; gap: 3px; margin-right: 24px; }
    .primary button { height: 72px; background: var(--blue); color: #fff; font-size: 36px; }
    .primary .main { padding: 0 30px; border-radius: 9px 0 0 9px; }
    .primary .drop { width: 72px; border-radius: 0 9px 9px 0; }
    .crumb { height: 116px; padding: 0 0 4px 36px; gap: 19px; }
    .crumb a { color: var(--link); }
    .crumb span { color: #a5a5a5; }
    .columns { flex: 1; min-height: 0; display: grid; grid-template-columns: minmax(0, 516fr) minmax(0, 601fr) minmax(0, 597fr); grid-template-rows: minmax(0, 1fr); }
  `];
  render() {
    return html`
      <div class="strip">
        <div class="tab">${icon("notes", "slate")}<span class="name cap">筆記</span><button class="slate" aria-label="關閉">${icon("close")}</button></div>
        <button class="new slate" aria-label="新分頁">${icon("plus")}</button>
      </div>
      <section class="sheet">
        <div class="bar top">
          <button class="square menu" aria-label="側欄">${icon("menu")}</button>
          <label class="field"><input type="text" placeholder="搜尋" aria-label="搜尋">${icon("find", "slate")}</label>
          <button class="share">${icon("share")}分享</button>
          <div class="primary"><button class="main">新的筆記</button><button class="drop" aria-label="更多">${icon("chevron")}</button></div>
          <button class="square" aria-label="選單">${icon("dotsSmall")}</button>
        </div>
        <div class="bar crumb"><a href="#">所有</a><span>${mixed("(18 個結果)")}</span></div>
        <div class="columns"><filter-column></filter-column><note-list></note-list><note-editor></note-editor></div>
      </section>`;
  }
}

@customElement("app-root")
class AppRoot extends LitElement {
  static styles = css`
    :host { display: block; }
    .shell {
      box-sizing: border-box;
      display: grid;
      grid-template-columns: 138px minmax(0, 1fr) minmax(0, 1fr);
      grid-template-rows: minmax(0, 1fr);
      height: 100vh;
      padding-right: 6px;
      background: #ededed;
      overflow: hidden;
    }
    .pane { display: flex; flex-direction: column; min-height: 0; margin: 3px 0 6px; }
    .second { margin-left: 6px; }
    .first { margin-right: 6px; }
  `;
  render() {
    return html`<main class="shell">
      <side-rail></side-rail>
      <bible-pane class="pane first"></bible-pane>
      <notes-pane class="pane second"></notes-pane>
    </main>`;
  }
}
